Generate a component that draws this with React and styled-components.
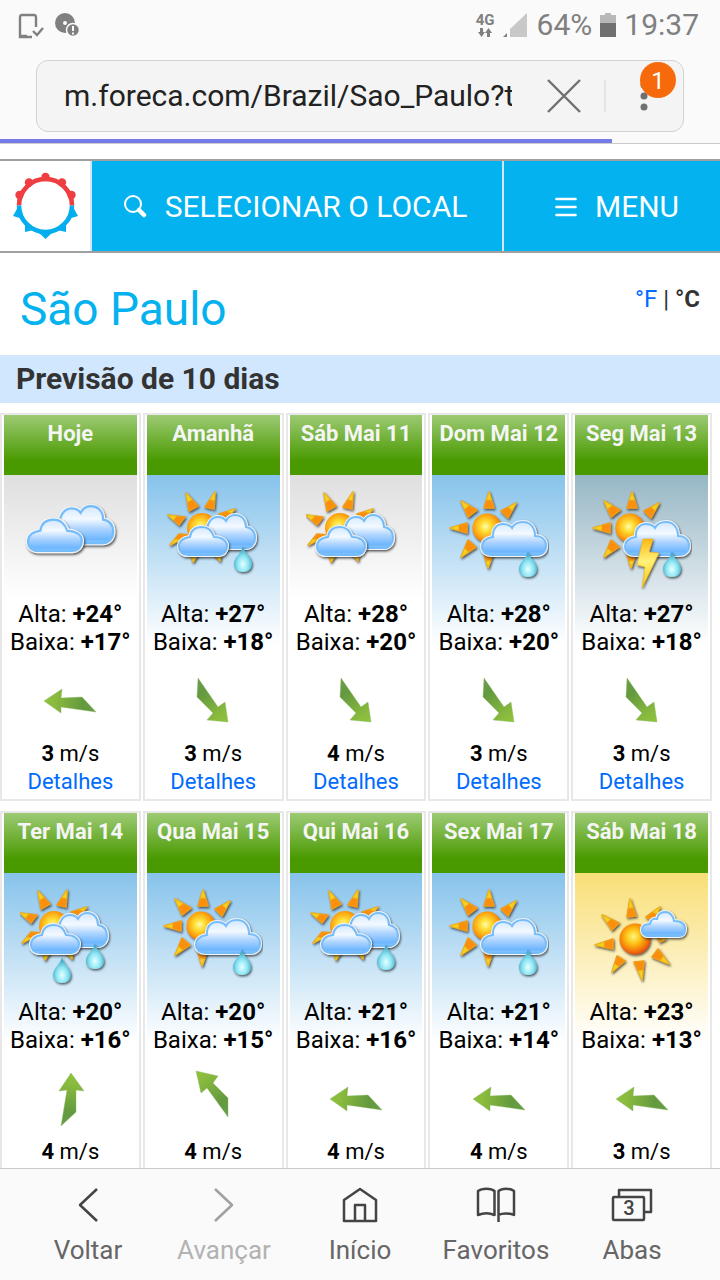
import React from 'react'
import styled, { createGlobalStyle } from 'styled-components'

const GlobalStyle = createGlobalStyle`
  * {
    box-sizing: border-box;
  }
  body {
    margin: 0;
    background: #fff;
    font-family: Roboto, 'Liberation Sans', sans-serif;
  }
  button,
  input {
    font: inherit;
    color: inherit;
    border: 0;
    margin: 0;
    padding: 0;
    background: transparent;
  }
  a {
    color: #006bff;
    text-decoration: none;
  }
  svg {
    display: block;
    flex: none;
  }
`

const Screen = styled.div`
  display: flex;
  flex-direction: column;
  height: 100vh;
`

const BrowserHeader = styled.header`
  flex: none;
  background: #fafafa;
  border-bottom: 1px solid #ccc;
`

const StatusBar = styled.div`
  display: flex;
  align-items: center;
  gap: 8px;
  height: 50px;
  padding: 0 21px 0 18px;
  color: #808080;
  font-size: 30px;
  line-height: 36px;
`

const StatusSpacer = styled.span`
  flex: 1;
`

const Network = styled.span`
  display: flex;
  flex-direction: column;
  align-items: center;
  font-size: 15px;
  font-weight: 700;
  line-height: 15px;
`

const AddressBar = styled.form`
  display: flex;
  align-items: center;
  height: 72px;
  margin: 10px 36px 7px;
  padding-left: 27px;
  background: #f4f4f4;
  border: 1px solid #d2d2d2;
  border-radius: 12px;
`

const Address = styled.input`
  flex: 1;
  min-width: 0;
  color: #222;
  font-size: 30px;
  line-height: 40px;
  outline: none;
`

const StopButton = styled.button`
  display: flex;
  align-items: center;
  justify-content: center;
  width: 80px;
  height: 70px;
  margin-left: 12px;
`

const Divider = styled.span`
  width: 2px;
  height: 32px;
  background: #e4e4e4;
`

const MoreButton = styled.button`
  position: relative;
  display: flex;
  align-items: center;
  justify-content: center;
  width: 77px;
  height: 70px;
  padding-right: 2px;
`

const Badge = styled.span`
  position: absolute;
  top: 1px;
  right: 7px;
  width: 36px;
  height: 36px;
  border-radius: 50%;
  background: #f76a0c;
  color: #fff;
  font-size: 24px;
  line-height: 38px;
  text-align: center;
`

const Progress = styled.div`
  width: 85%;
  height: 4px;
  background: #747be8;
`

const Page = styled.main`
  flex: 1;
  min-height: 0;
  overflow-y: auto;
  scrollbar-width: none;
  padding-top: 15px;
`

const SiteNav = styled.nav`
  display: flex;
  height: 94px;
  border-top: 2px solid #a0a0a0;
  border-bottom: 2px solid #a0a0a0;
`

const LogoLink = styled.a`
  display: flex;
  align-items: center;
  justify-content: center;
  width: 90px;
`

const NavButton = styled.button`
  flex: ${props => (props.$grow ? 1 : 'none')};
  width: ${props => (props.$grow ? 'auto' : '218px')};
  display: flex;
  align-items: center;
  justify-content: center;
  gap: 18px;
  padding: ${props => (props.$grow ? '2px 4px 0 0' : '2px 0 0 10px')};
  border-left: 2px solid #d1e7fe;
  background: #03b2ee;
  color: #fff;
  font-size: 30px;
  line-height: 36px;
  white-space: nowrap;
`

const CityRow = styled.div`
  display: flex;
  justify-content: space-between;
  height: 102px;
  padding: 28px 20px 0;
`

const City = styled.h1`
  margin: 0;
  color: #03b2ee;
  font-size: 46px;
  font-weight: 400;
  line-height: 56px;
`

const Units = styled.div`
  color: #333;
  font-size: 24px;
  line-height: 36px;
`

const SectionTitle = styled.h2`
  margin: 0 0 10px;
  padding: 0 16px;
  background: #d1e7fe;
  color: #333;
  font-size: 30px;
  font-weight: 700;
  line-height: 48px;
`

const Days = styled.div`
  display: grid;
  grid-template-columns: repeat(5, 1fr);
  gap: 10px 2px;
  padding-right: 8px;
`

const skies = {
  grey: 'linear-gradient(#dfdfdf, #fff 125px)',
  blue: 'linear-gradient(#87c3eb, #fff 170px)',
  storm: 'linear-gradient(#97b7c5, #fff 170px)',
  yellow: 'linear-gradient(#f9df78, #fff 170px)',
}

const DayCard = styled.article`
  padding: 0 2px 3px;
  border: 2px solid #e8e8e8;
  background: #fff;
  color: #000;
  text-align: center;
  white-space: nowrap;
`

const DayName = styled.h3`
  height: 60px;
  margin: 0;
  background: linear-gradient(#9dca74, #499a00 46px);
  color: #f5f5f5;
  font-size: 22px;
  font-weight: 700;
  line-height: 38px;
`

const Sky = styled.div`
  display: flex;
  flex-direction: column;
  align-items: center;
  padding-top: 15px;
  background: ${props => skies[props.$sky]};
`

const Temperatures = styled.p`
  margin: 10px 0 0;
  font-size: 24px;
  line-height: 28px;
`

const Wind = styled.div`
  display: flex;
  justify-content: center;
  padding: 16px 0 8px;
`

const Speed = styled.p`
  margin: 0;
  font-size: 22px;
  line-height: 28px;
`

const Details = styled.a`
  display: block;
  font-size: 22px;
  line-height: 28px;
`

const Toolbar = styled.nav`
  flex: none;
  display: grid;
  grid-template-columns: repeat(5, 1fr);
  height: 112px;
  padding: 0 20px;
  background: #fafafa;
  border-top: 1px solid #ccc;
`

const ToolbarButton = styled.button`
  display: flex;
  flex-direction: column;
  align-items: center;
  gap: 7px;
  padding-top: 16px;
  color: #666;
  font-size: 26px;
  line-height: 36px;
  white-space: nowrap;
  &:disabled {
    color: #b2b2b2;
  }
`

const SharedDefs = styled.svg`
  position: absolute;
  width: 0;
  height: 0;
`

// line goes from the head of the arrow to its tail
const arrows = {
  w: {
    points: '4,29 22,17 21,26 42,25 56,40 21,35 21,41',
    line: [4, 29, 56, 36],
  },
  se: {
    points: '15,6 35,35 42,30 45,50 24,48 30,41 14,25',
    line: [45, 50, 15, 8],
  },
  n: {
    points: '31,3 44,21 36,20 36,42 21,56 27,20 19,21',
    line: [31, 3, 29, 56],
  },
  nw: {
    points: '13,1 35,6 30,13 45,28 45,47 24,18 18,23',
    line: [13, 1, 45, 44],
  },
}

const Gradients = () => (
  <SharedDefs aria-hidden="true">
    <defs>
      <radialGradient id="sun" cx="0.45" cy="0.45" r="0.58">
        <stop offset="0" stopColor="#fffbb0" />
        <stop offset="0.3" stopColor="#ffe038" />
        <stop offset="0.7" stopColor="#fda40f" />
        <stop offset="1" stopColor="#e86c0c" />
      </radialGradient>
      <radialGradient id="hotSun" cx="0.45" cy="0.42" r="0.58">
        <stop offset="0" stopColor="#fff580" />
        <stop offset="0.4" stopColor="#fdc414" />
        <stop offset="0.8" stopColor="#f5780c" />
        <stop offset="1" stopColor="#e0500c" />
      </radialGradient>
      <linearGradient id="cloud" x1="0" y1="0" x2="0" y2="1">
        <stop offset="0" stopColor="#d3e8ff" />
        <stop offset="0.35" stopColor="#f3f9ff" />
        <stop offset="0.6" stopColor="#b0d5ff" />
        <stop offset="0.9" stopColor="#6db6ff" />
        <stop offset="1" stopColor="#8cc8ff" />
      </linearGradient>
      <radialGradient id="drop" cx="0.5" cy="0.7" r="0.6">
        <stop offset="0" stopColor="#e6ffff" />
        <stop offset="0.5" stopColor="#8fe6f5" />
        <stop offset="1" stopColor="#3aa3bd" />
      </radialGradient>
      <linearGradient id="bolt" x1="0" y1="0" x2="0" y2="1">
        <stop offset="0" stopColor="#fdb813" />
        <stop offset="0.45" stopColor="#fff27a" />
        <stop offset="1" stopColor="#f7c600" />
      </linearGradient>
      <filter id="shade" x="-20%" y="-20%" width="150%" height="150%">
        <feDropShadow
          dx="1"
          dy="1.5"
          stdDeviation="0.8"
          floodColor="#222"
          floodOpacity="0.75"
        />
      </filter>
      {Object.keys(arrows).map(name => {
        const [x1, y1, x2, y2] = arrows[name].line
        return (
          <linearGradient
            key={name}
            id={`wind-${name}`}
            gradientUnits="userSpaceOnUse"
            x1={x1}
            y1={y1}
            x2={x2}
            y2={y2}
          >
            <stop offset="0" stopColor="#8fc23c" />
            <stop offset="0.2" stopColor="#8abb3e" />
            <stop offset="0.75" stopColor="#63993f" />
            <stop offset="1" stopColor="#689e49" />
          </linearGradient>
        )
      })}
    </defs>
  </SharedDefs>
)

const WindArrow = ({ direction }) => (
  <svg width="60" height="60" viewBox="0 0 60 60" aria-hidden="true">
    <polygon
      points={arrows[direction].points}
      fill={`url(#wind-${direction})`}
      stroke="#8aba63"
      strokeOpacity="0.4"
    />
  </svg>
)

// each ray runs from its pointed end to the two corners near the sun
const Rays = ({ rays }) => (
  <g filter="url(#shade)">
    {rays.map(([tipX, tipY, ax, ay, bx, by]) => (
      <g key={`${tipX}-${tipY}`}>
        <path
          d={`M${tipX} ${tipY}L${ax} ${ay}L${bx} ${by}Z`}
          fill="#fb8f0e"
          stroke="#f29a14"
          strokeWidth="1.600"
          strokeLinejoin="round"
        />
        <path
          d={`M${tipX} ${tipY}L${(tipX + ax) / 2} ${(tipY + ay) / 2}L${(tipX +
            bx) /
            2} ${(tipY + by) / 2}Z`}
          fill="#f9cf20"
          stroke="#e9bd1c"
        />
      </g>
    ))}
  </g>
)

const Cloud = ({ d }) => (
  <g>
    <path
      d={d}
      fill="#f4f4f4"
      stroke="#f2f4f6"
      strokeWidth="4"
      filter="url(#shade)"
    />
    <path d={d} fill="url(#cloud)" stroke="#74bcfa" strokeWidth="2" />
  </g>
)

const Drop = ({ x, y }) => (
  <path
    transform={`translate(${x} ${y})`}
    d="M0 0C1 7 9 11 9 18C9 23 5 26 0 26C-5 26 -9 23 -9 18C-9 11 -1 7 0 0Z"
    fill="url(#drop)"
    filter="url(#shade)"
  />
)

const REAR_CLOUD =
  'M52 59C44 59 42 50 46 44C44 35 49 28 56 28C60 28 62 29 64 32C66 28 69 26 73 26C80 26 84 31 84 38C90 39 93 43 93 49C93 55 89 59 84 59Z'
const FRONT_CLOUD =
  'M26 66C20 66 17 62 17 58C17 53 20 49 28 48C29 41 33 38 40 38C47 38 50 42 52 48C60 48 65 52 65 57C65 62 62 66 56 66Z'
const WIDE_CLOUD =
  'M43 65C36 65 33 61 33 57C33 51 37 48 44 47C43 39 48 34 54 34C58 34 61 35 63 38C65 34 69 32 74 32C81 32 86 37 86 46C93 46 97 50 97 56C97 61 94 65 87 65Z'
const SMALL_CLOUD =
  'M57 48C53 48 51 45 51 42C51 38 54 36 59 36C60 31 63 30 66 31C67 26 70 24 74 24C79 24 82 28 83 33C90 33 94 36 94 41C94 45 92 48 88 48Z'

const HIDDEN_SUN_RAYS = [
  [24, 4, 27, 22, 36, 17],
  [53, 3, 43, 18, 52, 20],
  [6, 26, 17, 36, 23, 28],
  [73, 20, 57, 25, 66, 28],
  [8, 56, 17, 45, 28, 46],
  [31, 73, 28, 64, 37, 64],
  [58, 72, 50, 64, 59, 64],
]
const WIDE_SUN_RAYS = [
  [1, 38, 18, 33, 18, 43],
  [12, 11, 19, 27, 28, 20],
  [40, 2, 35, 18, 45, 18],
  [67, 13, 52, 21, 59, 28],
  [12, 67, 19, 50, 27, 57],
  [39, 78, 35, 64, 44, 64],
]
const CLEAR_SUN_RAYS = [
  [39, 11, 36, 29, 45, 28],
  [69, 19, 55, 29, 63, 33],
  [11, 27, 21, 42, 28, 35],
  [4, 57, 22, 51, 22, 61],
  [21, 84, 26, 68, 34, 73],
  [51, 92, 43, 74, 53, 73],
  [78, 76, 61, 69, 67, 61],
  [75, 51, 66, 49, 69, 54],
]

const CloudySun = () => (
  <g>
    <Rays rays={HIDDEN_SUN_RAYS} />
    <circle cx="40" cy="39" r="15" fill="url(#sun)" />
    <Cloud d={REAR_CLOUD} />
    <Cloud d={FRONT_CLOUD} />
  </g>
)

const WideSun = () => (
  <g>
    <Rays rays={WIDE_SUN_RAYS} />
    <circle cx="38" cy="38" r="14.500" fill="url(#sun)" filter="url(#shade)" />
    <Cloud d={WIDE_CLOUD} />
  </g>
)

const weather = {
  cloudy: (
    <g transform="translate(-11 -13) scale(1.12)">
      <Cloud d={REAR_CLOUD} />
      <Cloud d={FRONT_CLOUD} />
    </g>
  ),
  partlyCloudy: (
    <g transform="translate(-6 -1)">
      <CloudySun />
    </g>
  ),
  lightRain: (
    <g transform="translate(-1 -1)">
      <CloudySun />
      <Drop x={81} y={57} />
    </g>
  ),
  rain: (
    <g transform="translate(-6 -1)">
      <CloudySun />
      <Drop x={81} y={56} />
      <Drop x={48} y={70} />
    </g>
  ),
  showers: (
    <g>
      <WideSun />
      <Drop x={79} y={61} />
    </g>
  ),
  thunder: (
    <g>
      <WideSun />
      <Drop x={80} y={61} />
      <path
        d="M51 49L61 49L57 62L67 63L50 98L53 77L45 75Z"
        fill="url(#bolt)"
        stroke="#e8b21a"
        strokeWidth="0.6"
        filter="url(#shade)"
      />
    </g>
  ),
  mostlyClear: (
    <g transform="translate(-1 0)">
      <Rays rays={CLEAR_SUN_RAYS} />
      <circle cx="44" cy="51" r="15.500" fill="url(#hotSun)" filter="url(#shade)" />
      <Cloud d={SMALL_CLOUD} />
    </g>
  ),
}

const days = [
  ['Hoje', 'grey', 'cloudy', 24, 17, 'w', 3],
  ['Amanhã', 'blue', 'lightRain', 27, 18, 'se', 3],
  ['Sáb Mai 11', 'grey', 'partlyCloudy', 28, 20, 'se', 4],
  ['Dom Mai 12', 'blue', 'showers', 28, 20, 'se', 3],
  ['Seg Mai 13', 'storm', 'thunder', 27, 18, 'se', 3],
  ['Ter Mai 14', 'blue', 'rain', 20, 16, 'n', 4],
  ['Qua Mai 15', 'blue', 'showers', 20, 15, 'nw', 4],
  ['Qui Mai 16', 'blue', 'lightRain', 21, 16, 'w', 4],
  ['Sex Mai 17', 'blue', 'showers', 21, 14, 'w', 4],
  ['Sáb Mai 18', 'yellow', 'mostlyClear', 23, 13, 'w', 3],
]

const Day = ({ name, sky, icon, high, low, wind, speed }) => (
  <DayCard>
    <DayName>{name}</DayName>
    <Sky $sky={sky}>
      <svg width="100" height="100" viewBox="0 0 100 100" aria-hidden="true">
        {weather[icon]}
      </svg>
      <Temperatures>
        Alta: <b>+{high}°</b>
        <br />
        Baixa: <b>+{low}°</b>
      </Temperatures>
    </Sky>
    <Wind>
      <WindArrow direction={wind} />
    </Wind>
    <Speed>
      <b>{speed}</b> m/s
    </Speed>
    <Details href="#detalhes">Detalhes</Details>
  </DayCard>
)

const Logo = () => (
  <svg width="72" height="72" viewBox="0 0 72 72" aria-hidden="true">
    <g fill="#ef3e42">
      <circle cx="36.500" cy="7" r="4.200" />
      <circle cx="20" cy="12.500" r="4.200" />
      <circle cx="53" cy="12.500" r="4.200" />
      <circle cx="10.500" cy="25" r="4.200" />
      <circle cx="62.500" cy="25" r="4.200" />
    </g>
    <g fill="#03aeef">
      <path d="M28 61H45L36.500 69Z" />
      <path d="M16 53V62L25 60Z" />
      <path d="M57 53V62L48 60Z" />
      <path d="M9 37L4 46L14 49Z" />
      <path d="M64 37L69 46L59 49Z" />
    </g>
    <g fill="none" strokeWidth="4.600">
      <path d="M10 35.500A26.500 26.500 0 0 1 63 35.500" stroke="#ef3e42" />
      <path d="M10 35.500A26.500 26.500 0 0 0 63 35.500" stroke="#03aeef" />
    </g>
  </svg>
)

const ToolIcon = ({ children }) => (
  <svg
    width="44"
    height="40"
    viewBox="0 0 44 40"
    fill="none"
    strokeWidth="2.500"
    strokeLinejoin="round"
    aria-hidden="true"
  >
    {children}
  </svg>
)

const tools = [
  {
    label: 'Voltar',
    icon: <path d="M31 4L14 20L31 36" stroke="#444" />,
  },
  {
    label: 'Avançar',
    disabled: true,
    icon: <path d="M13 4L30 20L13 36" stroke="#a0a0a0" />,
  },
  {
    label: 'Início',
    icon: (
      <path d="M6 36V15L22 4L38 15V36ZM17 36V20H27V36" stroke="#444" />
    ),
  },
  {
    label: 'Favoritos',
    icon: (
      <path
        d="M20.500 30C16 28 9 28 4 30V6C8 3 17 3 20.500 6ZM24.500 37V6C28 3 36 3 40 6V30C36 28 28 28 24.500 30"
        stroke="#444"
      />
    ),
  },
  {
    label: 'Abas',
    icon: (
      <g stroke="#444">
        <path d="M9 11V5H41V27H35" />
        <rect x="3" y="12" width="31" height="23" rx="1" />
        <text
          x="19"
          y="30"
          fill="#444"
          stroke="none"
          fontSize="20"
          fontWeight="500"
          textAnchor="middle"
        >
          3
        </text>
      </g>
    ),
  },
]

const App = () => {
  return (
    <Screen>
      <GlobalStyle />
      <Gradients />
      <BrowserHeader>
        <StatusBar>
          <svg width="28" height="28" viewBox="0 0 28 28" aria-hidden="true">
            <path
              d="M18 16V6Q18 4 16 4H4Q2 4 2 6V26H14M2 25H9"
              fill="none"
              stroke="#808080"
              strokeWidth="2.400"
            />
            <path
              d="M15 20L19 24L25 17"
              fill="none"
              stroke="#808080"
              strokeWidth="2.400"
            />
          </svg>
          <svg width="26" height="26" viewBox="0 0 26 26" aria-hidden="true">
            <circle cx="11" cy="11" r="10" fill="#808080" />
            <circle cx="11" cy="11" r="2" fill="#fafafa" />
            <circle
              cx="19"
              cy="18"
              r="6.500"
              fill="#808080"
              stroke="#fafafa"
              strokeWidth="1.500"
            />
            <path d="M19 14V19M19 20.500V22.500" stroke="#fafafa" strokeWidth="2" />
          </svg>
          <StatusSpacer />
          <Network>
            4G
            <svg width="16" height="10" viewBox="0 0 16 10" aria-hidden="true">
              <path
                d="M3 0H6V4H8L4.500 9L1 4H3ZM10 9H13V5H15L11.500 0L8 5H10Z"
                fill="#808080"
              />
            </svg>
          </Network>
          <svg width="26" height="24" viewBox="0 0 26 24" aria-hidden="true">
            <path d="M24 0V24H7V16Z" fill="#c8c8c8" />
            <path d="M4 20V24H0Z" fill="#808080" />
          </svg>
          <span>64%</span>
          <svg width="16" height="24" viewBox="0 0 16 24" aria-hidden="true">
            <path d="M5 0H11V2H16V10H0V2H5Z" fill="#b8b8b8" />
            <path d="M0 10H16V24H0Z" fill="#707070" />
          </svg>
          <span>19:37</span>
        </StatusBar>
        <AddressBar>
          <Address
            aria-label="Endereço"
            defaultValue="m.foreca.com/Brazil/Sao_Paulo?t"
          />
          <StopButton type="button" aria-label="Parar">
            <svg width="34" height="34" viewBox="0 0 34 34" aria-hidden="true">
              <path
                d="M1 1L33 33M33 1L1 33"
                stroke="#707070"
                strokeWidth="2.400"
              />
            </svg>
          </StopButton>
          <Divider />
          <MoreButton type="button" aria-label="Mais opções">
            <svg width="8" height="30" viewBox="0 0 8 30" fill="#707070">
              <circle cx="4" cy="4" r="3.500" />
              <circle cx="4" cy="15" r="3.500" />
              <circle cx="4" cy="26" r="3.500" />
            </svg>
            <Badge>1</Badge>
          </MoreButton>
        </AddressBar>
        <Progress />
      </BrowserHeader>

      <Page>
        <SiteNav>
          <LogoLink href="#inicio" aria-label="Foreca">
            <Logo />
          </LogoLink>
          <NavButton type="button" $grow>
            <svg width="24" height="24" viewBox="0 0 24 24" fill="none">
              <circle cx="10" cy="9" r="8" stroke="#fff" strokeWidth="2" />
              <path
                d="M16 15L21 20"
                stroke="#fff"
                strokeWidth="4.500"
                strokeLinecap="round"
              />
            </svg>
            SELECIONAR O LOCAL
          </NavButton>
          <NavButton type="button">
            <svg width="22" height="22" viewBox="0 0 22 22" fill="none">
              <path
                d="M1.500 3H20.500M1.500 11H20.500M1.500 19H20.500"
                stroke="#fff"
                strokeWidth="2.600"
                strokeLinecap="round"
              />
            </svg>
            MENU
          </NavButton>
        </SiteNav>
        <CityRow>
          <City>São Paulo</City>
          <Units>
            <a href="#fahrenheit">°F</a> | <b>°C</b>
          </Units>
        </CityRow>
        <SectionTitle>Previsão de 10 dias</SectionTitle>
        <Days>
          {days.map(([name, sky, icon, high, low, wind, speed]) => (
            <Day
              key={name}
              name={name}
              sky={sky}
              icon={icon}
              high={high}
              low={low}
              wind={wind}
              speed={speed}
            />
          ))}
        </Days>
      </Page>

      <Toolbar>
        {tools.map(({ label, icon, disabled }) => (
          <ToolbarButton key={label} type="button" disabled={disabled}>
            <ToolIcon>{icon}</ToolIcon>
            {label}
          </ToolbarButton>
        ))}
      </Toolbar>
    </Screen>
  )
}

export default App
